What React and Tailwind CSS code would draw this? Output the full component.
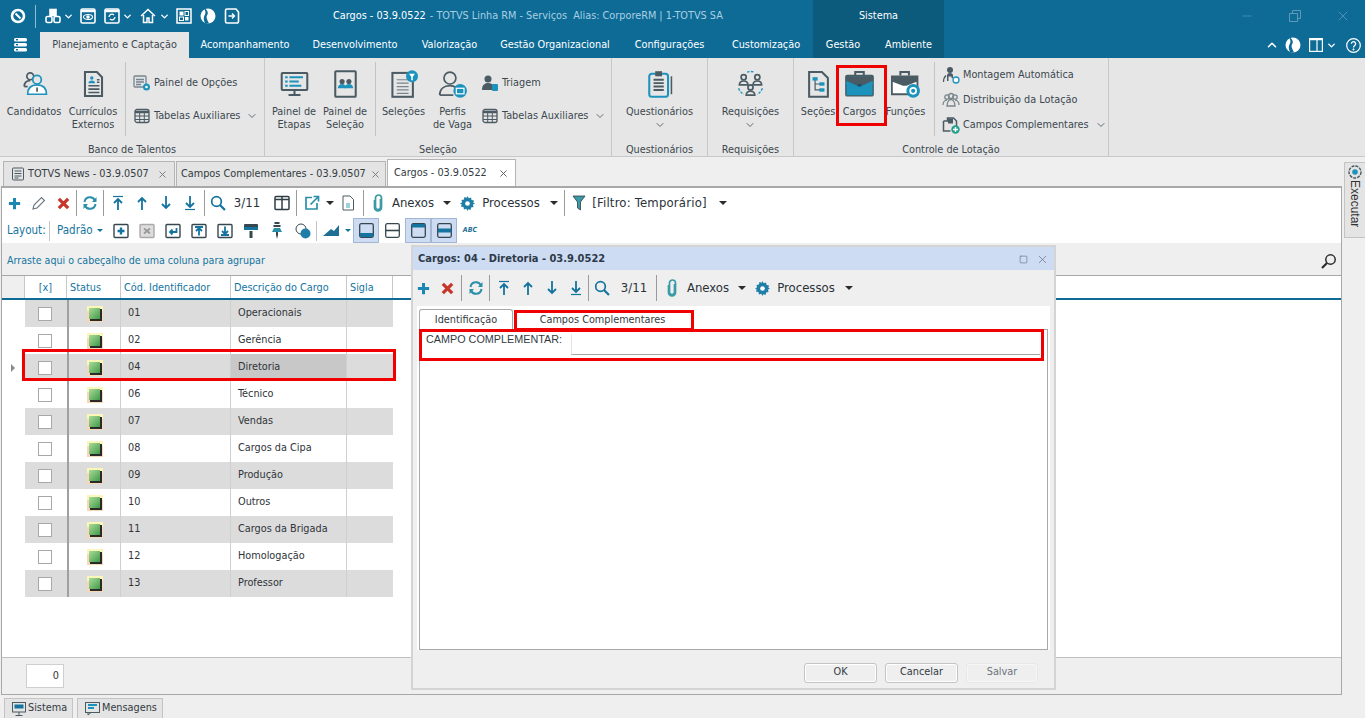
import { ChevronDown, ChevronUp, X, Minus, Square } from 'lucide-react'

const TEAL = '#1c93bd'
const DARK = '#4b5b63'
const BLUE = '#14749f'

// ---- title bar icons
const TitleIcon = ({ children, w = 18 }) => (
    <svg width={w} height="18" viewBox="0 0 18 18" fill="none" stroke="#fff" strokeWidth="1.6">{children}</svg>
)
const Globe = ({ size = 16 }) => (
    <svg width={size} height={size} viewBox="0 0 16 16" className="shrink-0">
        <circle cx="8" cy="8" r="7.5" fill="#fff" />
        <path d="M5.5 .8C8 3 8.5 5.5 7 7.500 5.800 9 7.500 12.500 9 15.200 7 15.600 6 15.500 5 15 3.500 12 3.200 9 5 6.500 5.800 5 5.500 3 4.500 1.500Z" fill="#0d6b96" />
    </svg>
)
const Chev = ({ className = 'text-white' }) => <ChevronDown size={11} strokeWidth={3} className={`shrink-0 ${className}`} />

function TitleBar() {
    return (
        <div className="flex h-8 shrink-0">
            <div className="flex w-[333px] items-center text-white">
                <div className="flex w-[35px] justify-center pl-[1px]">
                    <TitleIcon><circle cx="9" cy="9" r="6" strokeWidth="2.6" /><path d="M6.500 6.500l5 5" strokeWidth="2" /></TitleIcon>
                </div>
                <div className="h-[23px] w-px bg-[#8fbdd2]" />
                <div className="ml-[6px] flex w-[21px] justify-center">
                    <TitleIcon><rect x="6" y="2.500" width="6" height="6" fill="#fff" /><rect x="2" y="9.500" width="6" height="6" rx="1.500" /><rect x="10" y="9.500" width="6" height="6" rx="1.500" /></TitleIcon>
                </div>
                <Chev />
                <div className="ml-[4px] flex w-[20px] justify-center">
                    <TitleIcon><rect x="2" y="2" width="14" height="14" rx="1.500" /><path d="M2 4h14" strokeWidth="2.500" /><ellipse cx="9" cy="10" rx="4.500" ry="2.500" strokeWidth="1.200" /><circle cx="9" cy="10" r="1" fill="#fff" /></TitleIcon>
                </div>
                <div className="ml-[4px] flex w-[20px] justify-center">
                    <TitleIcon><rect x="2" y="2" width="14" height="14" rx="1.500" /><path d="M2 4h14" strokeWidth="2.500" /><path d="M6 10a3 3 0 0 1 5-2M12 10a3 3 0 0 1-5 2" strokeWidth="1.300" /></TitleIcon>
                </div>
                <Chev />
                <div className="ml-[4px] flex w-[22px] justify-center">
                    <TitleIcon><path d="M2 9l7-6.500L16 9M4.500 8v7.500h3.500V11h2v4.500h3.500V8" strokeWidth="1.500" /></TitleIcon>
                </div>
                <Chev />
                <div className="ml-[4px] flex w-[20px] justify-center">
                    <TitleIcon><rect x="2" y="2" width="14" height="14" strokeWidth="1.500" /><rect x="4.500" y="4.500" width="4" height="4" fill="#fff" stroke="none" /><rect x="10" y="4.500" width="3.500" height="4" strokeWidth="1" /><rect x="4.500" y="10" width="4" height="3.500" strokeWidth="1" /><rect x="10" y="10" width="3.500" height="3.500" fill="#fff" stroke="none" /></TitleIcon>
                </div>
                <div className="ml-[5px] flex w-[18px] justify-center"><Globe /></div>
                <div className="ml-[6px] flex w-[18px] justify-center">
                    <TitleIcon><path d="M13 2H4a1.500 1.500 0 0 0-1.500 1.500v11A1.500 1.500 0 0 0 4 16h10a1.500 1.500 0 0 0 1.500-1.500V5Z" /><path d="M5.500 9h6M9 6.500L11.500 9 9 11.500" strokeWidth="1.400" /></TitleIcon>
                </div>
            </div>
            <div className="flex w-[480px] items-center whitespace-nowrap">
                <span className="text-white">Cargos - 03.9.0522</span>
                <span className="ml-[4px] text-[#a9cfe2]">- TOTVS Linha RM - Serviços&nbsp; Alias: CorporeRM | 1-TOTVS SA</span>
            </div>
            <div className="flex w-[131px] items-center justify-center bg-[#0c5a7c] text-white">Sistema</div>
            <div className="flex flex-1 items-center justify-end pr-[14px] text-[#5f9bb9]">
                <Minus size={14} strokeWidth={1.200} className="mr-[35px]" />
                <svg width="12" height="12" viewBox="0 0 12 12" fill="none" stroke="currentColor" className="mr-[34px]"><path d="M.5 3.500h8v8h-8zM3.500 3V.5h8v8H9" /></svg>
                <X size={16} strokeWidth={1.200} />
            </div>
        </div>
    )
}

function MenuTab({ w, children }) {
    return <div className={`flex items-center justify-center ${w}`}>{children}</div>
}

function MenuBar() {
    return (
        <div className="flex h-[26px] shrink-0 text-white">
            <div className="flex w-[40px] items-center justify-center">
                <svg width="13" height="14" viewBox="0 0 13 14" fill="#fff"><rect width="13" height="3.400" rx="1.500" /><rect y="5" width="13" height="3.400" rx="1.500" /><rect y="10" width="13" height="3.400" rx="1.500" /><rect x="2" y="1" width="2" height="1.400" fill="#0d6b96" /><rect x="2" y="6" width="2" height="1.400" fill="#0d6b96" /><rect x="2" y="11" width="2" height="1.400" fill="#0d6b96" /></svg>
            </div>
            <div className="flex w-[149px] items-center justify-center bg-[#e6e6e6] text-[#3c4850]">Planejamento e Captação</div>
            <MenuTab w="w-[112px]">Acompanhamento</MenuTab>
            <MenuTab w="w-[108px]">Desenvolvimento</MenuTab>
            <MenuTab w="w-[81px]">Valorização</MenuTab>
            <MenuTab w="w-[130px]">Gestão Organizacional</MenuTab>
            <MenuTab w="w-[99px]">Configurações</MenuTab>
            <MenuTab w="w-[94px]">Customização</MenuTab>
            <div className="flex w-[131px] bg-[#0c5a7c]">
                <MenuTab w="w-[60px]">Gestão</MenuTab>
                <MenuTab w="w-[71px]">Ambiente</MenuTab>
            </div>
            <div className="flex flex-1 items-center justify-end pr-[4px]">
                <ChevronUp size={14} strokeWidth={2.600} />
                <div className="ml-[6px]"><Globe /></div>
                <svg width="14" height="14" viewBox="0 0 14 14" fill="none" stroke="#fff" strokeWidth="1.200" className="ml-[8px]"><rect x=".6" y=".6" width="12.800" height="12.800" /><path d="M1 1.500h12" strokeWidth="1.500" /><path d="M8 1v12" /></svg>
                <Chev className="ml-[3px] text-white" />
                <svg width="15" height="15" viewBox="0 0 15 15" fill="none" stroke="#fff" className="ml-[9px]"><circle cx="7.500" cy="7.500" r="6.800" strokeWidth="1.200" /><path d="M5.400 5.800a2.100 2.100 0 1 1 3.300 1.700c-.8.6-1.200 1-1.200 2" strokeWidth="1.300" /><circle cx="7.500" cy="11.400" r=".6" fill="#fff" /></svg>
            </div>
        </div>
    )
}

// ---- ribbon icons
const Big = ({ children }) => (
    <svg width="29" height="28" viewBox="0 0 34 32" fill="none" stroke={DARK} strokeWidth="2">{children}</svg>
)
const icons = {
    candidatos: <Big><circle cx="12" cy="7" r="4" /><path d="M5 19c0-5 3-7 7-7" /><path d="M5 19h4" /><circle cx="20" cy="11" r="5" stroke={TEAL} fill="#e6e6e6" /><path d="M9 28c0-7 4-11 11-11s11 4 11 11Z" stroke={TEAL} fill="#fff" /><path d="M20 20v5" stroke={DARK} /></Big>,
    curriculos: <Big><path d="M7 2h14l6 6v22H7Z" strokeWidth="2.400" /><circle cx="15" cy="9" r="2" fill={TEAL} stroke="none" /><path d="M11 15c0-2 2-3 4-3s4 1 4 3Z" fill={TEAL} stroke="none" /><path d="M21 11h3M21 14h3M11 18h13M11 22h13M11 26h13" strokeWidth="1.800" /></Big>,
    etapas: <Big><rect x="2" y="3" width="30" height="20" rx="1" strokeWidth="2.400" /><path d="M11 8h16M11 13h11M11 18h14" stroke={TEAL} strokeWidth="2.400" /><path d="M6 8h3M6 13h3M6 18h3" stroke={TEAL} strokeWidth="2.400" /><path d="M17 23v5M10 29h14" strokeWidth="2.400" /></Big>,
    selecao: <Big><rect x="5" y="1" width="24" height="30" rx="1" strokeWidth="2.400" /><circle cx="13" cy="13" r="3" fill={DARK} stroke="none" /><circle cx="21" cy="13" r="3" fill={DARK} stroke="none" /><path d="M8 21c0-3 2-5 5-5s5 2 5 5Z" fill={TEAL} stroke="none" /><path d="M16 21c0-3 2-5 5-5s5 2 5 5Z" fill={TEAL} stroke="none" /></Big>,
    selecoes: <Big><rect x="4" y="3" width="24" height="28" strokeWidth="2.400" /><path d="M9 11h14M9 15h14M9 19h14M9 23h14M9 27h14" strokeWidth="1.400" stroke="#78858c" /><circle cx="27" cy="7" r="7" fill={TEAL} stroke="none" /><path d="M23.500 4h7l-2.600 3.500v4h-1.800v-4Z" fill="#fff" stroke="none" /></Big>,
    perfis: <Big><circle cx="14" cy="9" r="7" /><path d="M2 29c0-7 5-11 12-11 3 0 5 .7 7 2" /><path d="M2 29h16" /><circle cx="26" cy="24" r="8" fill={TEAL} stroke="none" /><rect x="21.500" y="21" width="9" height="6.500" fill="none" stroke="#fff" strokeWidth="1.400" /></Big>,
    questionarios: <Big><rect x="5" y="4" width="22" height="27" rx="3" stroke={TEAL} strokeWidth="2.400" /><rect x="12" y="1" width="8" height="6" fill={DARK} stroke="none" /><path d="M10 11h12M10 15h12M10 19h12M10 23h12" strokeWidth="2.200" /><path d="M31 7v21" strokeWidth="1.800" /></Big>,
    requisicoes: <Big><circle cx="9" cy="8" r="3" /><path d="M4 17c0-3 2-4.500 5-4.500s5 1.500 5 4.500Z" /><circle cx="25" cy="8" r="3" /><path d="M20 17c0-3 2-4.500 5-4.500s5 1.500 5 4.500Z" /><circle cx="17" cy="20" r="3" /><path d="M12 29c0-3 2-4.500 5-4.500s5 1.500 5 4.500Z" /><path d="M13 2a13 13 0 0 1 8 0M3 21a14 14 0 0 0 6 7M31 21a14 14 0 0 1-6 7" stroke={TEAL} strokeDasharray="3 1.500" strokeWidth="1.600" /></Big>,
    secoes: <Big><path d="M6 2h15l7 7v22H6Z" strokeWidth="2.400" /><path d="M13 10v13h6M13 16h6" strokeWidth="1.400" /><rect x="10" y="8" width="6" height="4" fill={TEAL} stroke="none" /><rect x="18" y="14" width="6" height="4" fill={TEAL} stroke="none" /><rect x="18" y="21" width="6" height="4" fill={TEAL} stroke="none" /></Big>,
    cargos: <Big><path d="M12 6V2h10v4" strokeWidth="2.400" /><rect x="1" y="6" width="32" height="24" rx="1.500" fill={TEAL} stroke={DARK} strokeWidth="1.600" /><path d="M1 7h32v5l-13 6h-6L1 12Z" fill={DARK} stroke="none" /><path d="M1 14l13 6h6l13-6v2L20 22h-6L1 16Z" fill={TEAL} stroke="none" /><rect x="15" y="16" width="4" height="3" fill="#10556f" stroke="none" /></Big>,
    funcoes: <Big><path d="M11 6V2h10v4" strokeWidth="2.400" /><path d="M1 7h30v21H1Z" fill="#fff" strokeWidth="2.200" /><path d="M1 7h30v6l-13 5h-4L1 13Z" fill={DARK} stroke="none" /><circle cx="26" cy="24" r="8" fill={TEAL} stroke="none" /><circle cx="26" cy="24" r="3.500" stroke="#fff" strokeWidth="2" /></Big>,
}

const Sm = ({ children }) => (
    <svg width="18" height="18" viewBox="0 0 18 18" fill="none" stroke={DARK} strokeWidth="1.300" className="shrink-0">{children}</svg>
)
const small = {
    opcoes: <Sm><rect x="1" y="2" width="12" height="11" rx="1" fill="#dfe5e8" stroke="#78858c" /><path d="M3 5.500h8M3 8h8M3 10.500h5" stroke="#78858c" /><circle cx="13.500" cy="13" r="3.500" fill={TEAL} stroke="none" /><circle cx="13.500" cy="13" r="1.300" fill="#fff" stroke="none" /></Sm>,
    tabela: <Sm><rect x="2" y="2.500" width="14" height="13" rx="2" /><path d="M2 5h14" strokeWidth="2.500" /><path d="M2 9h14M2 12.500h14M6.700 5v10M11.300 5v10" strokeWidth="1" /></Sm>,
    triagem: <Sm><circle cx="7" cy="5" r="3.500" fill={DARK} stroke="none" /><path d="M1 16c0-5 2.500-7 6-7s5 1.500 5.500 3v4Z" fill={DARK} stroke="none" /><rect x="11" y="10" width="6" height="7" rx="1" fill={TEAL} stroke="none" /></Sm>,
    montagem: <Sm><circle cx="8" cy="4" r="3" fill={DARK} stroke="none" /><path d="M5 15V9.500C5 8 6 7 8 7s3 1 3 2.500V12H9.500v-1.500h-3V15Z" fill={DARK} stroke="none" /><path d="M1.500 16c0-3 .8-5 2.500-6.500" /><circle cx="14" cy="14" r="3" fill="#fff" stroke={TEAL} /></Sm>,
    distribuicao: <Sm><circle cx="5" cy="6" r="2.200" stroke="#78858c" /><circle cx="13" cy="6" r="2.200" stroke="#78858c" /><circle cx="9" cy="5" r="2.500" stroke="#78858c" /><path d="M1 14c0-3 2-5 4-5M17 14c0-3-2-5-4-5M5 15c0-4 2-6.500 4-6.500s4 2.500 4 6.500Z" stroke="#78858c" /></Sm>,
    campos: <Sm><path d="M1.500 5h4v-3h6l3 3v5M1.500 5v10h7" strokeWidth="1.500" /><rect x="6" y="2.500" width="5" height="5" fill={DARK} stroke="none" /><circle cx="13.500" cy="13.500" r="4.200" fill="#20a08a" stroke="none" /><path d="M13.500 11v5M11 13.500h5" stroke="#fff" strokeWidth="1.500" /></Sm>,
}

function BigBtn({ icon, w, lines, chevron }) {
    return (
        <div className={`flex shrink-0 flex-col items-center pt-[10px] ${w}`}>
            <div className="flex h-[32px] items-center justify-center">{icons[icon]}</div>
            <div className="mt-[5px] flex flex-col items-center whitespace-nowrap leading-[13px]">
                {lines.map((l) => <span key={l}>{l}</span>)}
                {chevron && <ChevronDown size={12} className="mt-[1px] text-[#5f6b73]" />}
            </div>
        </div>
    )
}

function SmallBtn({ icon, label, chevron }) {
    return (
        <div className="flex items-center whitespace-nowrap">
            {small[icon]}
            <span className="ml-[3px]">{label}</span>
            {chevron && <ChevronDown size={12} className="ml-[6px] text-[#5f6b73]" />}
        </div>
    )
}

const GroupSep = ({ className = '' }) => <div className={`mt-[4px] h-[74px] w-px shrink-0 bg-[#c4c4c4] ${className}`} />

function RibbonGroup({ w, label, children }) {
    return (
        <div className={`flex shrink-0 flex-col border-r border-[#c8c8c8] ${w}`}>
            <div className="flex h-[84px] shrink-0">{children}</div>
            <div className="flex h-[14px] items-center justify-center pt-[1px] leading-[14px]">{label}</div>
        </div>
    )
}

function Ribbon() {
    return (
        <div className="flex h-[99px] shrink-0 border-b border-[#c8c8c8] bg-[#e6e6e6] text-[#3c4850]">
            <RibbonGroup w="w-[265px]" label="Banco de Talentos">
                <div className="w-[5px] shrink-0" />
                <BigBtn icon="candidatos" w="w-[58px]" lines={['Candidatos']} />
                <BigBtn icon="curriculos" w="w-[60px]" lines={['Currículos', 'Externos']} />
                <GroupSep className="ml-[2px]" />
                <div className="flex flex-col gap-[15px] pl-[7px] pt-[16px]">
                    <SmallBtn icon="opcoes" label="Painel de Opções" />
                    <SmallBtn icon="tabela" label="Tabelas Auxiliares" chevron />
                </div>
            </RibbonGroup>
            <RibbonGroup w="w-[347px]" label="Seleção">
                <div className="w-[3px] shrink-0" />
                <BigBtn icon="etapas" w="w-[52px]" lines={['Painel de', 'Etapas']} />
                <BigBtn icon="selecao" w="w-[50px]" lines={['Painel de', 'Seleção']} />
                <GroupSep className="ml-[5px]" />
                <BigBtn icon="selecoes" w="w-[55px]" lines={['Seleções']} />
                <BigBtn icon="perfis" w="w-[43px]" lines={['Perfis', 'de Vaga']} />
                <div className="flex flex-col gap-[15px] pl-[7px] pt-[16px]">
                    <SmallBtn icon="triagem" label="Triagem" />
                    <SmallBtn icon="tabela" label="Tabelas Auxiliares" chevron />
                </div>
            </RibbonGroup>
            <RibbonGroup w="w-[96px]" label="Questionários">
                <BigBtn icon="questionarios" w="w-full" lines={['Questionários']} chevron />
            </RibbonGroup>
            <RibbonGroup w="w-[86px]" label="Requisições">
                <BigBtn icon="requisicoes" w="w-full" lines={['Requisições']} chevron />
            </RibbonGroup>
            <RibbonGroup w="w-[315px]" label="Controle de Lotação">
                <div className="w-[4px] shrink-0" />
                <BigBtn icon="secoes" w="w-[40px]" lines={['Seções']} />
                <BigBtn icon="cargos" w="w-[43px]" lines={['Cargos']} />
                <BigBtn icon="funcoes" w="w-[49px]" lines={['Funções']} />
                <GroupSep className="ml-[4px]" />
                <div className="flex flex-col gap-[7px] pl-[7px] pt-[8px]">
                    <SmallBtn icon="montagem" label="Montagem Automática" />
                    <SmallBtn icon="distribuicao" label="Distribuição da Lotação" />
                    <SmallBtn icon="campos" label="Campos Complementares" chevron />
                </div>
            </RibbonGroup>
        </div>
    )
}

function DocTabs() {
    return (
        <div className="flex h-[29px] shrink-0 items-end pl-[3px] text-[#333b42]">
            <div className="flex h-[25px] w-[172px] items-center border border-b-0 border-[#b4b4b4] bg-[#e4e4e4] pl-[7px]">
                <svg width="14" height="14" viewBox="0 0 14 14" fill="none" stroke={DARK}><rect x="1.500" y="1" width="11" height="12" rx="1" /><path d="M3.500 4h7M3.500 6.500h7M3.500 9h7M3.500 11h4" /></svg>
                <span className="ml-[3px] whitespace-nowrap">TOTVS News - 03.9.0507</span>
                <X size={11} className="ml-auto mr-[6px] text-[#777]" />
            </div>
            <div className="ml-px flex h-[25px] w-[210px] items-center border border-b-0 border-[#b4b4b4] bg-[#e4e4e4] pl-[4px]">
                <span className="whitespace-nowrap">Campos Complementares - 03.9.0507</span>
                <X size={11} className="ml-auto mr-[4px] text-[#777]" />
            </div>
            <div className="ml-px flex h-[27px] w-[129px] items-center border border-b-0 border-[#b4b4b4] bg-white pl-[6px]">
                <span className="whitespace-nowrap">Cargos - 03.9.0522</span>
                <X size={11} className="ml-auto mr-[6px] text-[#555]" />
            </div>
        </div>
    )
}

// ---- toolbar icons
const Tb = ({ children, size = 16 }) => (
    <svg width={size} height={size} viewBox="0 0 16 16" fill="none" stroke={BLUE} strokeWidth="1.800">{children}</svg>
)
const TbPlus = () => <Tb size={15}><path d="M8 2v12M2 8h12" strokeWidth="3.200" stroke="#1c86b4" /></Tb>
const TbCross = () => <Tb size={15}><path d="M3 3l10 10M13 3L3 13" stroke="#c8352b" strokeWidth="3.400" /></Tb>
const TbRefresh = () => <Tb><path d="M2.500 7A5.500 5.500 0 0 1 13 5.500M13.500 9A5.500 5.500 0 0 1 3 10.500" strokeWidth="2" stroke="#2b8fa8" /><path d="M14.500 2v5h-4.500ZM1.500 14V9H6Z" fill="#2b8fa8" stroke="none" /></Tb>
const TbTop = () => <Tb><path d="M3 1.500h10" strokeWidth="1.200" /><path d="M8 15V4.500M4 8l4-4 4 4" /></Tb>
const TbUp = () => <Tb><path d="M8 15V3M4 7l4-4 4 4" /></Tb>
const TbDown = () => <Tb><path d="M8 1v12M4 9l4 4 4-4" /></Tb>
const TbBottom = () => <Tb><path d="M3 14.500h10" strokeWidth="1.200" /><path d="M8 1v10.500M4 8l4 4 4-4" /></Tb>
const TbSearch = () => <Tb><circle cx="6.500" cy="6.500" r="4.800" strokeWidth="1.700" /><path d="M10 10l5 5" strokeWidth="2.200" /></Tb>
const TbPencil = () => <Tb><path d="M2 14l1-4 7.500-7.500 3 3L6 13Z" stroke="#6b7780" strokeWidth="1.100" /></Tb>
const TbCols = () => <svg width="16" height="16" viewBox="0 0 16 16" fill="none" stroke="#2f3e46" strokeWidth="1.500"><rect x="1" y="1.500" width="14" height="13" rx="1" /><path d="M8 2v12M1 4.500h14" /></svg>
const TbExport = () => <Tb><path d="M8 2.500H2v11.500h11V8" stroke="#2b8fa8" strokeWidth="1.700" /><path d="M6.500 9.500L14 2M9.500 1.500h5v5" stroke="#2b8fa8" strokeWidth="1.700" /></Tb>
const TbDoc = () => <svg width="14" height="16" viewBox="0 0 14 16" fill="none" stroke="#4b5b63"><path d="M2 1h7l3.500 3.500V15H2Z" /><rect x="5" y="8" width="4" height="5" fill="#9fd0e0" stroke="none" /></svg>
const TbClip = () => <svg width="14" height="18" viewBox="0 0 14 18" fill="none" stroke="#3a9aa6" strokeWidth="1.700"><path d="M9.500 5v8a2.500 2.500 0 0 1-5 0V4a3 3 0 0 1 6 0v9.500a3.500 3.500 0 0 1-7 0V6" /></svg>
const TbGear = () => <svg width="15" height="15" viewBox="0 0 16 16"><path d="M8 0l1.300 2.300 2.500-.8.500 2.700 2.700.5-.8 2.500L16 8l-2.300 1.300.8 2.500-2.700.5-.5 2.700-2.500-.8L8 16l-1.300-2.300-2.500.8-.5-2.700-2.700-.5.8-2.500L0 8l2.300-1.300-.8-2.500 2.700-.5.5-2.700 2.500.8Z" fill="#1f7ea8" /><circle cx="8" cy="8" r="2.500" fill="#fff" /></svg>
const TbFilter = () => <svg width="14" height="16" viewBox="0 0 14 16"><path d="M1 1h12L8.500 7v8l-3-2V7Z" fill="#3a9aa6" stroke="#2f3e46" strokeWidth=".8" /></svg>

const Slot = ({ w, children }) => <div className={`flex h-full shrink-0 items-center justify-center ${w}`}>{children}</div>
const Sep = ({ className = '' }) => <div className={`h-[26px] w-px shrink-0 bg-[#9a9a9a] ${className}`} />
const Caret = ({ w = 'w-[12px]' }) => (
    <div className={`flex h-full shrink-0 items-center justify-center ${w}`}>
        <div className="h-0 w-0 border-x-[4px] border-t-[4px] border-x-transparent border-t-[#2b2b2b]" />
    </div>
)

function MainToolbar() {
    return (
        <div className="flex h-[30px] items-center text-[13px] text-[#2b3238]">
            <Slot w="w-[24px]"><TbPlus /></Slot>
            <Slot w="w-[25px]"><TbPencil /></Slot>
            <Slot w="w-[24px]"><TbCross /></Slot>
            <Sep className="ml-[1px]" />
            <Slot w="w-[26px]"><TbRefresh /></Slot>
            <Sep />
            <Slot w="w-[28px]"><TbTop /></Slot>
            <Slot w="w-[20px]"><TbUp /></Slot>
            <Slot w="w-[28px]"><TbDown /></Slot>
            <Slot w="w-[20px]"><TbBottom /></Slot>
            <Sep className="ml-[4px]" />
            <Slot w="w-[26px]"><TbSearch /></Slot>
            <Slot w="w-[40px]"><span className="pr-[8px]">3/11</span></Slot>
            <Slot w="w-[22px]"><TbCols /></Slot>
            <Sep className="ml-[3px]" />
            <Slot w="w-[29px]"><TbExport /></Slot>
            <Caret w="w-[8px]" />
            <Slot w="w-[28px]"><TbDoc /></Slot>
            <Sep className="ml-[1px]" />
            <Slot w="w-[28px]"><TbClip /></Slot>
            <Slot w="w-[49px]"><span className="pr-[7px]">Anexos</span></Slot>
            <Caret />
            <Slot w="w-[29px]"><TbGear /></Slot>
            <Slot w="w-[66px]"><span className="pr-[8px]">Processos</span></Slot>
            <Caret />
            <Sep className="ml-[4px]" />
            <Slot w="w-[28px]"><TbFilter /></Slot>
            <Slot w="w-[123px]"><span className="whitespace-nowrap pr-[10px] tracking-[.2px]">[Filtro: Temporário]</span></Slot>
            <Caret w="w-[14px]" />
        </div>
    )
}

function ViewBtn({ active, kind }) {
    return (
        <div className={`flex h-[25px] w-[26px] shrink-0 items-center justify-center ${active ? 'border border-[#a3b6d3] bg-[#cddcf3]' : ''}`}>
            <svg width="15" height="15" viewBox="0 0 15 15" fill="none" stroke="#37474f" strokeWidth="1.300">
                <rect x=".7" y=".7" width="13.600" height="13.600" rx="1.500" />
                {kind === 'bottom' && <rect x="1" y="10" width="13" height="4" fill={BLUE} stroke="none" />}
                {kind === 'mid' && <path d="M1 7.500h13" strokeWidth="1.600" />}
                {kind === 'top' && <rect x="1" y="1" width="13" height="3.500" fill={BLUE} stroke="none" />}
                {kind === 'split' && <rect x="1" y="5.500" width="13" height="4" fill={BLUE} stroke="none" />}
            </svg>
        </div>
    )
}

const FrameIcon = ({ children, muted }) => (
    <svg width="16" height="16" viewBox="0 0 16 16" fill="none" stroke={muted ? '#aaa' : '#37474f'} strokeWidth="1.400">
        <rect x="1" y="1.500" width="14" height="13" rx="1" fill={muted ? '#ddd' : 'none'} />
        {children}
    </svg>
)

function LayoutToolbar() {
    return (
        <div className="flex h-[25px] items-center text-[11.500px] text-[#14749f]">
            <span className="w-[47px] pl-[5px]">Layout:</span>
            <div className="h-[20px] w-px bg-[#c4c4c4]" />
            <span className="ml-[7px] w-[38px]">Padrão</span>
            <div className="ml-[2px] h-0 w-0 border-x-[3px] border-t-[3px] border-x-transparent border-t-[#14749f]" />
            <div className="w-[5px] shrink-0" />
            <Slot w="w-[26px]"><FrameIcon><path d="M8 4.500v7M4.500 8h7" stroke={BLUE} strokeWidth="2.400" /></FrameIcon></Slot>
            <Slot w="w-[26px]"><FrameIcon muted><path d="M5 5.500l6 5M11 5.500l-6 5" stroke="#999" strokeWidth="1.800" /></FrameIcon></Slot>
            <Slot w="w-[26px]"><FrameIcon><path d="M11.500 5v4H5M7.500 6.500L5 9l2.500 2.500" stroke={BLUE} strokeWidth="1.800" /></FrameIcon></Slot>
            <Slot w="w-[26px]"><FrameIcon><path d="M4 4h8M8 12.500V5.500M5 8l3-3 3 3" stroke={BLUE} strokeWidth="1.800" /></FrameIcon></Slot>
            <Slot w="w-[26px]"><FrameIcon><path d="M4 12h8M8 3.500v7M5 8l3 3 3-3" stroke={BLUE} strokeWidth="1.800" /></FrameIcon></Slot>
            <Slot w="w-[26px]">
                <svg width="16" height="16" viewBox="0 0 16 16"><rect x="1" y="1" width="14" height="6" rx="1" fill="#37474f" /><rect x="1" y="4" width="14" height="3" fill={BLUE} /><rect x="6.500" y="8" width="3" height="7" fill="#37474f" /></svg>
            </Slot>
            <Slot w="w-[26px]">
                <svg width="12" height="17" viewBox="0 0 12 17"><rect x="3.500" y="0" width="5" height="2" fill="#37474f" /><rect x="2.500" y="3" width="7" height="2" fill="#37474f" /><path d="M3 6h6l2 4H1Z" fill="#2b8fa8" /><path d="M5 10h2v3l-1 4-1-4Z" fill="#37474f" /></svg>
            </Slot>
            <Slot w="w-[26px]">
                <svg width="16" height="16" viewBox="0 0 16 16"><circle cx="6" cy="6" r="5" fill="#fff" stroke="#37474f" /><circle cx="10.500" cy="10.500" r="5" fill="#1f7ea8" /></svg>
            </Slot>
            <div className="h-[20px] w-px bg-[#c4c4c4]" />
            <Slot w="w-[28px]">
                <svg width="16" height="11" viewBox="0 0 16 11"><path d="M0 11L8 4l3 2 5-6v11Z" fill="#1f6f94" /></svg>
            </Slot>
            <div className="h-0 w-0 border-x-[3px] border-t-[3px] border-x-transparent border-t-[#14749f]" />
            <div className="w-[2px] shrink-0" />
            <ViewBtn active kind="bottom" />
            <ViewBtn kind="mid" />
            <ViewBtn active kind="top" />
            <ViewBtn active kind="split" />
            <Slot w="w-[26px]"><span className="text-[7px] font-bold italic leading-none text-[#1f6f94]">ABC</span></Slot>
        </div>
    )
}

// ---- grid
const rows = [
    ['01', 'Operacionais'], ['02', 'Gerência'], ['04', 'Diretoria'], ['06', 'Técnico'],
    ['07', 'Vendas'], ['08', 'Cargos da Cipa'], ['09', 'Produção'], ['10', 'Outros'],
    ['11', 'Cargos da Brigada'], ['12', 'Homologação'], ['13', 'Professor'],
]

function StatusIcon() {
    return (
        <div className="relative h-[16px] w-[16px] bg-[#f6d9b4]">
            <div className="absolute left-[0px] top-[0px] h-[5px] w-[16px] bg-[#fbf7b8]" />
            <div className="absolute left-[3px] top-[3px] h-[12px] w-[12px] bg-[#2a2a2a]" />
            <div className="absolute left-[2px] top-[2px] h-[11px] w-[11px] bg-gradient-to-br from-[#a9dc9b] to-[#3e9a48]" />
        </div>
    )
}

function GridRow({ code, name, idx }) {
    const selected = code === '04'
    return (
        <div className="flex h-[27px] w-[391px] text-[#30343a]">
            <div className="flex w-[23px] shrink-0 items-center">
                {selected && <div className="ml-[9px] h-0 w-0 border-y-[4px] border-l-[4px] border-y-transparent border-l-[#8a8a8a]" />}
            </div>
            <div className={`flex flex-1 ${idx % 2 ? 'bg-white' : 'bg-[#dcdcdc]'}`}>
                <div className="flex w-[42px] shrink-0 items-center justify-center pr-[2px]">
                    <div className="h-[14px] w-[14px] border border-[#a8a8a8] bg-white" />
                </div>
                <div className="flex w-[54px] shrink-0 items-center justify-center border-l-2 border-r border-l-[#a0a0a0] border-r-[#cfcfcf]">
                    <StatusIcon />
                </div>
                <div className="flex w-[110px] shrink-0 items-center border-r border-[#cfcfcf] pl-[7px]">{code}</div>
                <div className={`flex w-[116px] shrink-0 items-center border-r border-[#cfcfcf] pl-[7px] ${selected ? 'bg-[#c8c8c8]' : ''}`}>{name}</div>
                <div className="flex-1" />
            </div>
        </div>
    )
}

function GridHead({ w, children, first }) {
    return <div className={`flex h-full shrink-0 items-center border-r border-[#c8c8c8] pt-[2px] ${w} ${first ? 'justify-center' : 'pl-[3px]'}`}>{children}</div>
}

function Grid() {
    return (
        <div className="flex min-h-0 flex-1 flex-col">
            <div className="flex h-[32px] items-center justify-between bg-[#efefef] pl-[5px] pr-[4px] pt-[3px] text-[10.600px] text-[#14749f]">
                <span>Arraste aqui o cabeçalho de uma coluna para agrupar</span>
                <svg width="16" height="16" viewBox="0 0 16 16" fill="none" stroke="#2b2b2b"><circle cx="9.500" cy="6.500" r="4.700" strokeWidth="1.500" /><path d="M6 10l-5 5" strokeWidth="2.200" /></svg>
            </div>
            <div className="flex h-[25px] shrink-0 border-b-2 border-t border-b-[#0d6b96] border-t-[#a8a8a8] bg-white text-[#14749f]">
                <div className="h-full w-[23px] shrink-0 border-r border-[#c8c8c8] bg-[#efefef]" />
                <GridHead w="w-[42px]" first>[x]</GridHead>
                <GridHead w="w-[54px]">Status</GridHead>
                <GridHead w="w-[110px]">Cód. Identificador</GridHead>
                <GridHead w="w-[116px]">Descrição do Cargo</GridHead>
                <GridHead w="w-[46px]">Sigla</GridHead>
            </div>
            <div className="min-h-0 flex-1 bg-white">
                {rows.map(([code, name], i) => <GridRow key={code} code={code} name={name} idx={i} />)}
            </div>
            <div className="flex h-[37px] shrink-0 items-center border-t border-[#c0c0c0] bg-[#efefef] pl-[24px]">
                <div className="flex h-[24px] w-[38px] items-center justify-end border border-[#cfcfcf] bg-white pr-[4px] text-[#333]">0</div>
            </div>
        </div>
    )
}

// ---- modal
function Modal() {
    return (
        <div className="absolute left-[411px] top-[245px] flex h-[445px] w-[645px] flex-col border-2 border-[#d4d4d4] bg-[#efefef]">
            <div className="flex h-[23px] shrink-0 items-center justify-between bg-[#cddcf3] pl-[5px] pr-[5px] pt-[1px] text-[11px] font-bold text-[#2e3a48]">
                <span>Cargos: 04 - Diretoria - 03.9.0522</span>
                <div className="flex items-center gap-[8px] text-[#5a6670]">
                    <Square size={9} strokeWidth={1.500} />
                    <X size={13} strokeWidth={1.200} />
                </div>
            </div>
            <div className="flex h-[36px] shrink-0 items-center text-[13px] text-[#2b3238]">
                <Slot w="w-[21px]"><TbPlus /></Slot>
                <Slot w="w-[26px]"><TbCross /></Slot>
                <Sep className="ml-[1px]" />
                <Slot w="w-[27px]"><TbRefresh /></Slot>
                <Sep />
                <Slot w="w-[27px]"><TbTop /></Slot>
                <Slot w="w-[21px]"><TbUp /></Slot>
                <Slot w="w-[27px]"><TbDown /></Slot>
                <Slot w="w-[21px]"><TbBottom /></Slot>
                <Sep className="ml-[2px]" />
                <Slot w="w-[26px]"><TbSearch /></Slot>
                <Slot w="w-[40px]"><span className="pr-[2px]">3/11</span></Slot>
                <Sep className="ml-[1px]" />
                <Slot w="w-[30px]"><TbClip /></Slot>
                <Slot w="w-[49px]"><span className="pr-[7px]">Anexos</span></Slot>
                <Caret />
                <Slot w="w-[29px]"><TbGear /></Slot>
                <Slot w="w-[66px]"><span className="pr-[8px]">Processos</span></Slot>
                <Caret />
            </div>
            <div className="mx-[4px] flex min-h-0 flex-1 flex-col bg-white pl-[2px] pt-[2px]">
                <div className="flex h-[21px] shrink-0 items-end text-[#333b42]">
                    <div className="flex h-[20px] w-[94px] items-center justify-center rounded-t-[3px] border border-b-0 border-[#a8a8a8] pt-[2px]">Identificação</div>
                    <div className="flex h-[20px] w-[179px] items-center justify-center pt-[3px]">Campos Complementares</div>
                </div>
                <div className="mr-[2px] flex-1 border border-[#a8a8a8] px-[6px] pt-[4px]">
                    <div className="flex">
                        <span className="w-[145px] shrink-0 whitespace-nowrap font-['Liberation_Sans',sans-serif] text-[10.800px] leading-[11px] text-[#333b42]">CAMPO COMPLEMENTAR:</span>
                        <div className="h-[21px] w-[469px] border-b border-l border-[#a8a8a8] border-l-[#e4e4e4] bg-white" />
                    </div>
                </div>
            </div>
            <div className="flex h-[38px] shrink-0 items-center justify-end gap-[8px] pr-[16px] pt-[7px] text-[#333b42]">
                <div className="flex h-[20px] w-[73px] items-center justify-center rounded-[3px] border border-[#c4c4c4] shadow-[inset_0_0_0_1px_#fff]">OK</div>
                <div className="flex h-[20px] w-[73px] items-center justify-center rounded-[3px] border border-[#c4c4c4] shadow-[inset_0_0_0_1px_#fff]">Cancelar</div>
                <div className="flex h-[20px] w-[72px] items-center justify-center rounded-[3px] border border-[#e8e8e8] text-[#6b737a] shadow-[inset_0_0_0_1px_#f6f6f6]">Salvar</div>
            </div>
        </div>
    )
}

const RedBox = ({ className }) => <div className={`pointer-events-none absolute border-[3px] border-[#f00000] ${className}`} />

export default function App() {
    return (
        <div className="relative flex h-[718px] w-[1365px] flex-col overflow-hidden bg-[#efefef] font-['DejaVu_Sans_Condensed','Liberation_Sans',sans-serif] text-[10.800px]">
            <div className="shrink-0 bg-[#0d6b96]">
                <TitleBar />
                <MenuBar />
            </div>
            <Ribbon />
            <div className="flex min-h-0 flex-1">
                <div className="flex w-[1343px] shrink-0 flex-col">
                    <DocTabs />
                    <div className="ml-px flex h-[509px] w-[1341px] shrink-0 flex-col border border-t-2 border-[#a8a8a8] bg-white">
                        <MainToolbar />
                        <LayoutToolbar />
                        <Grid />
                    </div>
                    <div className="flex flex-1 items-end gap-[4px] pl-[4px] text-[#333b42]">
                        <div className="flex h-[20px] w-[69px] items-center gap-[2px] border border-b-0 border-[#c4c4c4] bg-[#e4e4e4] pl-[7px]">
                            <svg width="14" height="16" viewBox="0 0 14 16" fill="none" stroke={DARK}><rect x=".5" y="1.500" width="13" height="9.500" /><rect x="2.500" y="3.500" width="9" height="4" fill={BLUE} stroke="none" /><path d="M7 11v3M3.500 14.500h7" /></svg>
                            Sistema
                        </div>
                        <div className="flex h-[20px] w-[86px] items-center gap-[2px] border border-b-0 border-[#c4c4c4] bg-[#e4e4e4] pl-[7px]">
                            <svg width="15" height="15" viewBox="0 0 15 15" fill="none" stroke={DARK}><rect x=".5" y="1.500" width="14" height="10" /><path d="M3 4h9M3 7h6" stroke={TEAL} strokeWidth="2" /><path d="M3 11.500v2.500l3-2.500" /></svg>
                            Mensagens
                        </div>
                    </div>
                </div>
                <div className="ml-px mt-[5px] flex h-[76px] w-[21px] flex-col items-center border border-r-0 border-[#c4c4c4] bg-[#e4e4e4] pt-[1px]">
                    <svg width="16" height="16" viewBox="0 0 16 16"><circle cx="8" cy="8" r="6" fill="none" stroke={DARK} strokeWidth="1.400" strokeDasharray="3 1" /><circle cx="8" cy="8" r="2.800" fill={TEAL} /></svg>
                    <span className="font-['Liberation_Sans',sans-serif] text-[12px] leading-[14px] text-[#333] [writing-mode:vertical-rl]">Executar</span>
                </div>
            </div>
            <Modal />
            <RedBox className="left-[836px] top-[65px] h-[61px] w-[51px]" />
            <RedBox className="left-[22px] top-[349px] h-[32px] w-[374px]" />
            <RedBox className="left-[514px] top-[310px] h-[21px] w-[180px]" />
            <RedBox className="left-[419px] top-[329px] h-[32px] w-[625px]" />
        </div>
    )
}
